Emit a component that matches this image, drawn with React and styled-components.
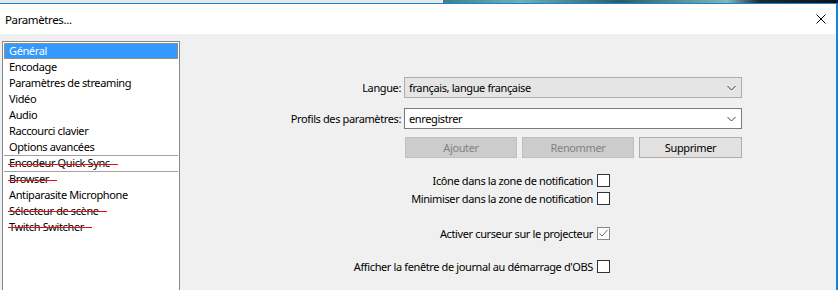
import React from "react";
import styled, { createGlobalStyle } from "styled-components";

const Global = createGlobalStyle`
  html, body { margin: 0; padding: 0; background: #e6e6e6; overflow: hidden; }
  body {
    font-family: "Noto Sans", "Open Sans", sans-serif;
    font-size: 11px;
    letter-spacing: -0.38px;
    color: #000;
  }
`;

const Screen = styled.div`
  width: 838px;
  height: 290px;
  display: flex;
  flex-direction: column;
  overflow: hidden;
`;

const Backdrop = styled.div`
  height: 3px;
  flex: none;
  background: linear-gradient(90deg, #e9e9e9 0, #e9e9e9 443px, #3f7f86 443px, #6fb1b3 520px, #2a5d63 620px, #7fb8b8 727px, #1b2a2e 760px, #0c1214 838px);
`;

const Window = styled.div`
  flex: 1;
  width: 836px;
  border-top: 1px solid #1883d7;
  border-right: 2px solid #1883d7;
  display: flex;
  flex-direction: column;
  background: #f0f0f0;
`;

const TitleBar = styled.div`
  height: 30px;
  flex: none;
  background: #fff;
  display: flex;
  align-items: center;
  justify-content: space-between;
  padding: 0 10px 0 5px;
`;

const Title = styled.span`
  font-size: 11.5px;
`;

const CloseIcon = () => (
  <svg width="10" height="10" viewBox="0 0 10 10">
    <path d="M0.5 0.5 L9.5 9.5 M9.5 0.5 L0.5 9.5" stroke="#000" strokeWidth="1" />
  </svg>
);

const Body = styled.div`
  flex: 1;
  display: flex;
  padding: 7px 0 0 2px;
`;

const List = styled.ul`
  list-style: none;
  margin: 0;
  width: 174px;
  flex: none;
  border: 1px solid #828790;
  border-bottom: none;
  background: #fff;
  padding: 1px 1px 0;
`;

const Item = styled.li`
  height: 16px;
  line-height: 16px;
  padding-left: 5px;
  box-sizing: border-box;
  white-space: nowrap;
  ${(p) =>
    p.$selected &&
    `
    background: #3399ff;
    color: #fff;
    outline: 1px dotted #e8891d;
    outline-offset: -1px;
  `}
  ${(p) => p.$sep && `border-top: 1px solid #a0a0a0; line-height: 14px;`}
`;

const Struck = styled.span`
  position: relative;
  display: inline-block;
  &::after {
    content: "";
    position: absolute;
    left: -1px;
    right: -8px;
    top: 8px;
    height: 1px;
    background: #e01010;
  }
`;

const Content = styled.div`
  flex: 1;
  padding: 36px 94px 0 0;
  display: flex;
  flex-direction: column;
`;

const Form = styled.div`
  display: grid;
  grid-template-columns: 1fr 338px;
  column-gap: 3px;
  row-gap: 10px;
  align-items: center;
`;

const Label = styled.label`
  text-align: right;
`;

const Combo = styled.div`
  height: 21px;
  box-sizing: border-box;
  border: 1px solid ${(p) => (p.$disabled ? "#adadad" : "#7a7a7a")};
  background: ${(p) => (p.$disabled ? "#e5e5e5" : "#fff")};
  display: flex;
  align-items: center;
  justify-content: space-between;
  padding: 0 5px 0 4px;
`;

const Chevron = () => (
  <svg width="9" height="6" viewBox="0 0 9 6">
    <path d="M0.5 1 L4.5 5 L8.5 1" fill="none" stroke="#404040" strokeWidth="1" />
  </svg>
);

const Buttons = styled.div`
  grid-column: 2;
  display: flex;
  gap: 5px;
  margin-top: -2px;
  padding-left: 1px;
`;

const Button = styled.div`
  height: 21px;
  box-sizing: border-box;
  width: ${(p) => p.$w}px;
  border: 1px solid ${(p) => (p.$disabled ? "#bfbfbf" : "#adadad")};
  background: ${(p) => (p.$disabled ? "#cccccc" : "#e1e1e1")};
  color: ${(p) => (p.$disabled ? "#838383" : "#000")};
  display: flex;
  align-items: center;
  justify-content: center;
`;

const Checks = styled.div`
  display: flex;
  flex-direction: column;
  align-items: flex-end;
  margin-right: 132px;
  margin-top: 13px;
`;

const CheckRow = styled.div`
  display: flex;
  align-items: center;
  gap: 4px;
  height: 18px;
  margin-top: ${(p) => p.$gap || 0}px;
`;

const Box = styled.span`
  width: 13px;
  height: 13px;
  box-sizing: border-box;
  border: 1px solid ${(p) => (p.$checked ? "#8a8a8a" : "#333")};
  background: #fff;
  display: flex;
  align-items: center;
  justify-content: center;
`;

const Check = () => (
  <svg width="11" height="11" viewBox="0 0 11 11">
    <path d="M1.5 5.5 L4 8 L9.5 2" fill="none" stroke="#6f6f6f" strokeWidth="1" />
  </svg>
);

const items = [
  { t: "Général", sel: true },
  { t: "Encodage" },
  { t: "Paramètres de streaming" },
  { t: "Vidéo" },
  { t: "Audio" },
  { t: "Raccourci clavier" },
  { t: "Options avancées" },
  { t: "Encodeur Quick Sync", strike: true, sep: true },
  { t: "Browser", strike: true, sep: true },
  { t: "Antiparasite Microphone" },
  { t: "Sélecteur de scène", strike: true },
  { t: "Twitch Switcher", strike: true },
];

export default function App() {
  return (
    <Screen>
      <Global />
      <Backdrop />
      <Window>
        <TitleBar>
          <Title>Paramètres...</Title>
          <CloseIcon />
        </TitleBar>
        <Body>
          <List>
            {items.map((it) => (
              <Item key={it.t} $selected={it.sel} $sep={it.sep}>
                {it.strike ? <Struck>{it.t}</Struck> : it.t}
              </Item>
            ))}
          </List>
          <Content>
            <Form>
              <Label>Langue:</Label>
              <Combo $disabled>
                <span>français, langue française</span>
                <Chevron />
              </Combo>
              <Label>Profils des paramètres:</Label>
              <Combo>
                <span>enregistrer</span>
                <Chevron />
              </Combo>
              <Buttons>
                <Button $w={112} $disabled>Ajouter</Button>
                <Button $w={112} $disabled>Renommer</Button>
                <Button $w={103}>Supprimer</Button>
              </Buttons>
            </Form>
            <Checks>
              <CheckRow>
                Icône dans la zone de notification <Box />
              </CheckRow>
              <CheckRow>
                Minimiser dans la zone de notification <Box />
              </CheckRow>
              <CheckRow $gap={17}>
                Activer curseur sur le projecteur
                <Box $checked>
                  <Check />
                </Box>
              </CheckRow>
              <CheckRow $gap={15}>
                Afficher la fenêtre de journal au démarrage d'OBS <Box />
              </CheckRow>
            </Checks>
          </Content>
        </Body>
      </Window>
    </Screen>
  );
}
